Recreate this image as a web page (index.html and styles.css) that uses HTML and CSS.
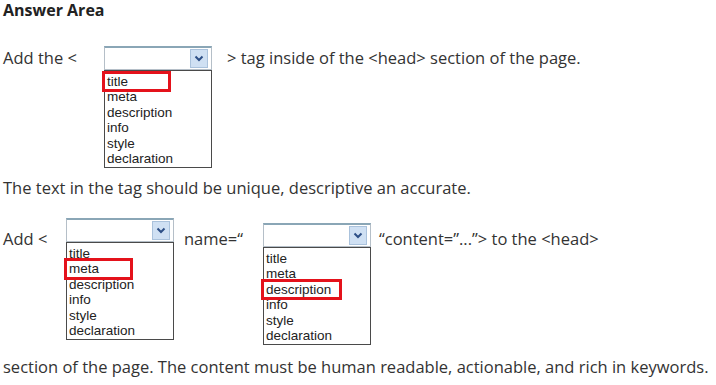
FILE: index.html
```html
<!DOCTYPE html>
<html lang="en">
<head>
    <meta charset="UTF-8">
    <title>Answer Area</title>
    <link rel="stylesheet" href="styles.css">
</head>
<body>

    <h2 class="heading">Answer Area</h2>

    <div class="row row-first">
        <span class="lead lead-first">Add the &lt;</span>
        <div class="dropdown">
            <div class="select">
                <span class="arrow">
                    <svg width="10" height="7" viewBox="0 0 10 7"><path d="M1.5 1.5 L5 5 L8.5 1.5" fill="none" stroke="#2d4f86" stroke-width="2"/></svg>
                </span>
            </div>
            <div class="list">
                <div class="item picked">title</div>
                <div class="item">meta</div>
                <div class="item">description</div>
                <div class="item">info</div>
                <div class="item">style</div>
                <div class="item">declaration</div>
            </div>
        </div>
        <span class="after after-first">&gt; tag inside of the &lt;head&gt; section of the page.</span>
    </div>

    <p class="line line-middle">The text in the tag should be unique, descriptive an accurate.</p>

    <div class="row row-second">
        <span class="lead lead-second">Add &lt;</span>
        <div class="dropdown">
            <div class="select">
                <span class="arrow">
                    <svg width="10" height="7" viewBox="0 0 10 7"><path d="M1.5 1.5 L5 5 L8.5 1.5" fill="none" stroke="#2d4f86" stroke-width="2"/></svg>
                </span>
            </div>
            <div class="list">
                <div class="item">title</div>
                <div class="item picked">meta</div>
                <div class="item">description</div>
                <div class="item">info</div>
                <div class="item">style</div>
                <div class="item">declaration</div>
            </div>
        </div>
        <span class="after name">name=&ldquo;</span>
        <div class="dropdown dropdown-low">
            <div class="select">
                <span class="arrow">
                    <svg width="10" height="7" viewBox="0 0 10 7"><path d="M1.5 1.5 L5 5 L8.5 1.5" fill="none" stroke="#2d4f86" stroke-width="2"/></svg>
                </span>
            </div>
            <div class="list">
                <div class="item">title</div>
                <div class="item">meta</div>
                <div class="item picked">description</div>
                <div class="item">info</div>
                <div class="item">style</div>
                <div class="item">declaration</div>
            </div>
        </div>
        <span class="after content">&ldquo;content=&rdquo;...&rdquo;&gt; to the &lt;head&gt;</span>
    </div>

    <p class="line line-last">section of the page. The content must be human readable, actionable, and rich in keywords.</p>

</body>
</html>
```

FILE: styles.css
```css
body {
    font-family: 'Open Sans', 'Noto Sans', sans-serif;
    font-size: 16.5px;
    color: #333;
    background-color: #fff;
    margin: 0;
    padding: 0 3px;
}
.heading {
    font-size: 16px;
    font-weight: bold;
    color: #222;
    margin: 0;
    line-height: 20px;
}
.row {
    display: flex;
    align-items: flex-start;
}
.row-first {
    margin-top: 26px;
}
.row-second {
    margin-top: 20px;
}
.lead,
.after {
    line-height: 20px;
    white-space: nowrap;
}
.lead-first {
    width: 101px;
    padding-top: 2px;
}
.lead-second {
    width: 63px;
    padding-top: 11px;
}
.after-first {
    margin-left: 15px;
    padding-top: 2px;
}
.name {
    width: 79px;
    margin-left: 10px;
    padding-top: 11px;
}
.content {
    margin-left: 8px;
    padding-top: 11px;
}
.dropdown {
    width: 108px;
    display: flex;
    flex-direction: column;
}
.dropdown-low {
    margin-top: 5px;
}
.select {
    height: 24px;
    box-sizing: border-box;
    border: 1px solid #b5bfc8;
    border-top: 2px solid #8aa6b6;
    background-color: #fff;
    display: flex;
    justify-content: flex-end;
    align-items: center;
    padding-right: 3px;
}
.arrow {
    width: 16px;
    height: 17px;
    background-color: #cfe0f3;
    border: 1px solid #aac2dc;
    display: flex;
    justify-content: center;
    align-items: center;
}
.list {
    height: 98px;
    box-sizing: border-box;
    border: 1px solid #4a4a4a;
    background-color: #fff;
    padding: 3px 0 0;
    font-family: 'Liberation Sans', Arial, sans-serif;
    font-size: 13.5px;
    color: #222;
}
.item {
    line-height: 15.4px;
    padding-left: 2px;
}
.item.picked {
    width: max-content;
    min-width: 63px;
    box-sizing: border-box;
    padding-right: 8px;
    box-shadow: 0 0 0 3px #e4121b;
}
.line {
    margin: 0;
    line-height: 20px;
    white-space: nowrap;
}
.line-middle {
    margin-top: 10px;
}
.line-last {
    margin-top: 12px;
}
```
